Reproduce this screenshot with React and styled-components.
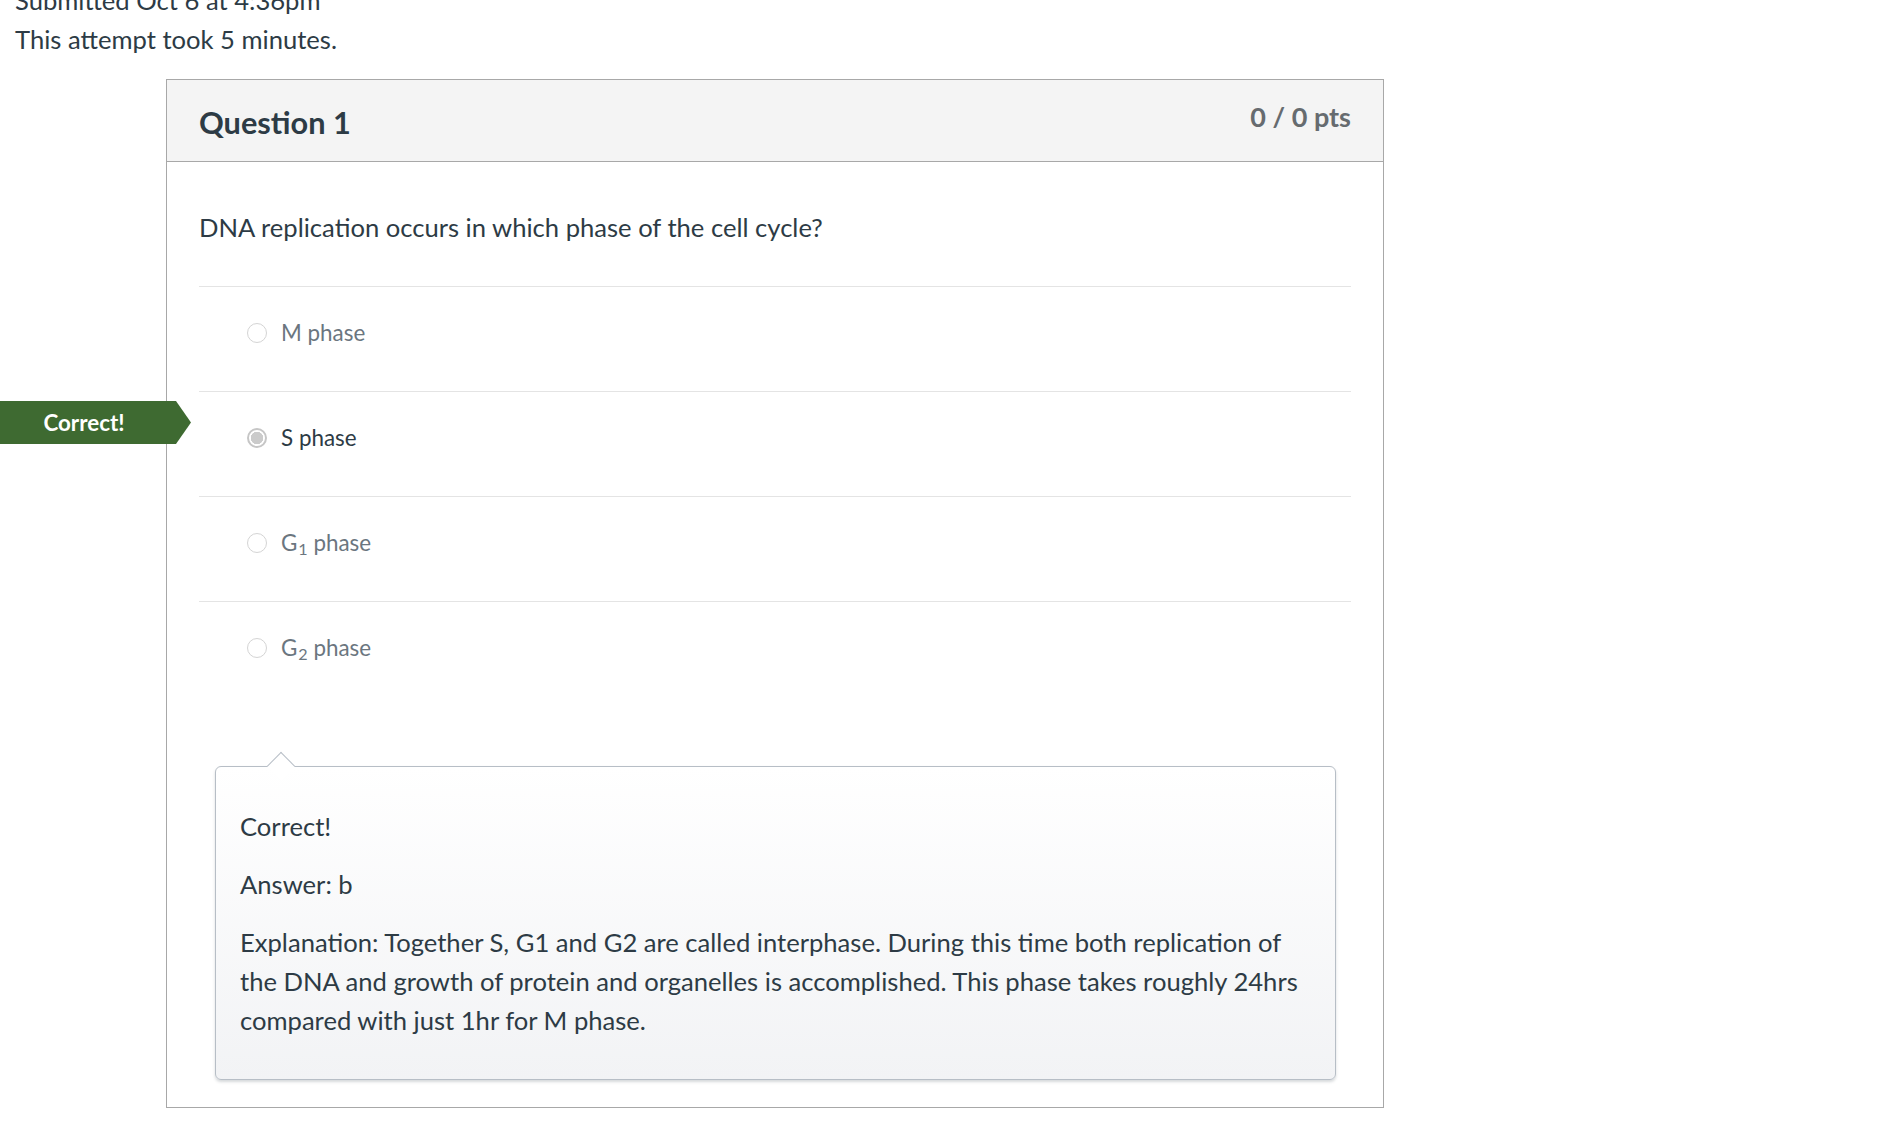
import React from "react";
import styled, { createGlobalStyle } from "styled-components";

const GlobalStyle = createGlobalStyle`
  html, body {
    margin: 0;
    padding: 0;
    background: #ffffff;
  }
  body {
    font-family: Lato, "Noto Sans", "Liberation Sans", sans-serif;
    color: #2d3b45;
    font-size: 25.6px;
    line-height: 39px;
  }
`;

const Page = styled.div`
  padding: 0 0 40px 15px;
  margin-top: -19px;
`;

const Meta = styled.div`
  font-size: 25.6px;
  line-height: 39px;
  color: #2d3b45;
`;

const Card = styled.section`
  margin: 20px 0 0 151px;
  width: 1218px;
  box-sizing: border-box;
  border: 1px solid #a8a8a8;
  background: #fff;
`;

const Header = styled.header`
  display: flex;
  justify-content: space-between;
  align-items: flex-start;
  background: #f4f4f4;
  border-bottom: 1px solid #a8a8a8;
  padding: 23px 32px 18px;
`;

const Title = styled.h2`
  margin: 0;
  font-size: 30.7px;
  line-height: 40px;
  font-weight: 700;
  color: #2d3b45;
`;

const Points = styled.div`
  font-size: 27px;
  line-height: 36px;
  font-weight: 700;
  color: #666b6f;
  margin-top: -4px;
`;

const Body = styled.div`
  padding: 46px 32px 27px;
`;

const QuestionText = styled.p`
  margin: 0 0 39px;
`;

const AnswerRow = styled.div`
  position: relative;
  display: flex;
  align-items: center;
  gap: 14px;
  border-top: 1px solid #e4e4e4;
  padding: 26px 0 39px 48px;
  color: ${(p) => (p.$selected ? "#2d3b45" : "#6b767f")};
`;

const Radio = styled.span`
  flex: none;
  width: 20px;
  height: 20px;
  box-sizing: border-box;
  border-radius: 50%;
  border: ${(p) => (p.$checked ? "2px solid #c6c6c6" : "1.5px solid #d4d4d4")};
  background: ${(p) =>
    p.$checked
      ? "radial-gradient(circle, #cbcbcb 0 6px, #ffffff 6.5px)"
      : "#ffffff"};
`;

const Label = styled.span`
  font-size: 22.4px;
  line-height: 39px;

  sub {
    font-size: 0.72em;
    line-height: 0;
    position: relative;
    vertical-align: baseline;
    bottom: -0.22em;
    margin-left: 1px;
  }
`;

const Flag = styled.div`
  position: absolute;
  right: calc(100% + 8px);
  top: 9px;
  width: 191px;
  height: 43px;
  box-sizing: border-box;
  padding-right: 23px;
  background: #3e6a31;
  clip-path: polygon(0 0, 176px 0, 100% 50%, 176px 100%, 0 100%);
  color: #ffffff;
  font-size: 22.4px;
  font-weight: 700;
  line-height: 43px;
  text-align: center;
`;

const Comment = styled.div`
  position: relative;
  margin: 60px 15px 0 16px;
  padding: 40px 24px 20px;
  border: 1px solid #b7bec6;
  border-radius: 6px;
  background: linear-gradient(to bottom, #ffffff, #f2f3f5);
  box-shadow: 0 2px 3px rgba(70, 80, 90, 0.22);

  &::before {
    content: "";
    position: absolute;
    left: 55px;
    top: -11px;
    width: 20px;
    height: 20px;
    box-sizing: border-box;
    background: #ffffff;
    border-left: 1px solid #b7bec6;
    border-top: 1px solid #b7bec6;
    transform: rotate(45deg);
  }
`;

const CommentPara = styled.p`
  margin: 0 0 19px;
  font-size: 25.6px;
  line-height: 39px;
  color: #2d3b45;
`;

const answers = [
  { id: "m", label: <>M phase</> },
  { id: "s", label: <>S phase</>, selected: true, correct: true },
  { id: "g1", label: <>G<sub>1</sub> phase</> },
  { id: "g2", label: <>G<sub>2</sub> phase</> },
];

export default function App() {
  return (
    <>
      <GlobalStyle />
      <Page>
        <Meta>Submitted Oct 6 at 4:36pm</Meta>
        <Meta>This attempt took 5 minutes.</Meta>
        <Card>
          <Header>
            <Title>Question 1</Title>
            <Points>0 / 0 pts</Points>
          </Header>
          <Body>
            <QuestionText>
              DNA replication occurs in which phase of the cell cycle?
            </QuestionText>
            {answers.map((a) => (
              <AnswerRow key={a.id} $selected={a.selected}>
                {a.correct && <Flag>Correct!</Flag>}
                <Radio $checked={a.selected} />
                <Label>{a.label}</Label>
              </AnswerRow>
            ))}
            <Comment>
              <CommentPara>Correct!</CommentPara>
              <CommentPara>Answer: b</CommentPara>
              <CommentPara>
                Explanation: Together S, G1 and G2 are called interphase. During
                this time both replication of the DNA and growth of protein and
                organelles is accomplished. This phase takes roughly 24hrs
                compared with just 1hr for M phase.
              </CommentPara>
            </Comment>
          </Body>
        </Card>
      </Page>
    </>
  );
}
